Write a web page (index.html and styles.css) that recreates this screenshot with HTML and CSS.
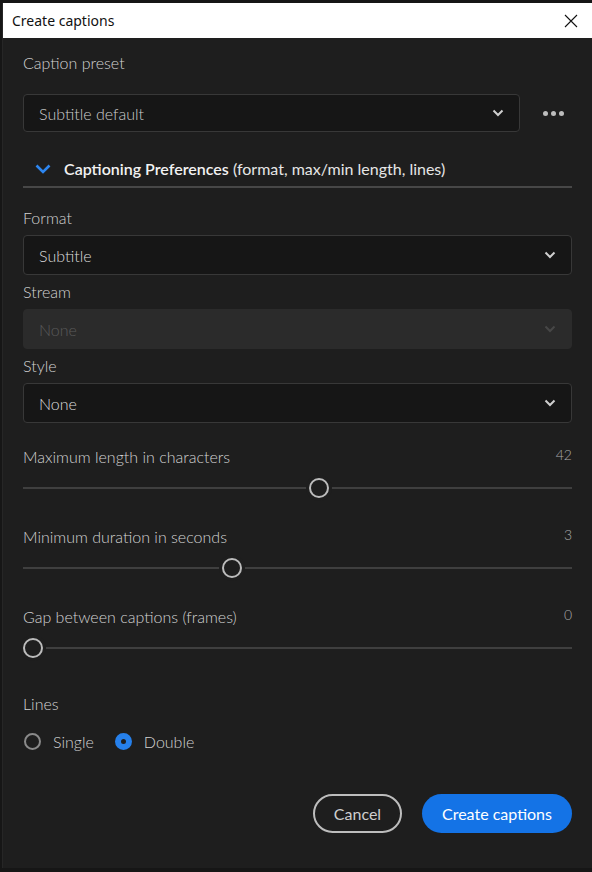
FILE: index.html
```html
<!DOCTYPE html>
<html>
<head>
<meta charset="utf-8">
<link rel="stylesheet" href="styles.css">
</head>
<body>
<div class="dialog">
  <div class="titlebar">
    <span class="title">Create captions</span>
    <svg class="close" width="14" height="14" viewBox="0 0 14 14"><path d="M1 1L13 13M13 1L1 13" stroke="#111" stroke-width="1.1" fill="none"/></svg>
  </div>
  <div class="content">
    <div class="label first">Caption preset</div>
    <div class="preset-row">
      <div class="select preset">
        <span>Subtitle default</span>
        <svg class="chev" width="12" height="8" viewBox="0 0 12 8"><path d="M1.5 1.5L6 6L10.5 1.5" stroke="#cfcfcf" stroke-width="2" fill="none"/></svg>
      </div>
      <div class="more"><i></i><i></i><i></i></div>
    </div>
    <div class="prefs">
      <svg class="bluechev" width="16" height="10" viewBox="0 0 16 10"><path d="M1.5 1.5L8 8L14.5 1.5" stroke="#2d86f0" stroke-width="2.6" fill="none"/></svg>
      <span class="prefs-text"><b>Captioning Preferences</b> (format, max/min length, lines)</span>
    </div>
    <div class="label gap-top">Format</div>
    <div class="select">
      <span>Subtitle</span>
      <svg class="chev" width="12" height="8" viewBox="0 0 12 8"><path d="M1.5 1.5L6 6L10.5 1.5" stroke="#cfcfcf" stroke-width="2" fill="none"/></svg>
    </div>
    <div class="label">Stream</div>
    <div class="select disabled">
      <span>None</span>
      <svg class="chev" width="12" height="8" viewBox="0 0 12 8"><path d="M1.5 1.5L6 6L10.5 1.5" stroke="#474747" stroke-width="2" fill="none"/></svg>
    </div>
    <div class="label">Style</div>
    <div class="select">
      <span>None</span>
      <svg class="chev" width="12" height="8" viewBox="0 0 12 8"><path d="M1.5 1.5L6 6L10.5 1.5" stroke="#cfcfcf" stroke-width="2" fill="none"/></svg>
    </div>

    <div class="slider-block s1">
      <div class="slider-head"><span>Maximum length in characters</span><span class="val">42</span></div>
      <div class="slider"><div class="track"></div><div class="thumb" style="left: 286px"></div></div>
    </div>
    <div class="slider-block">
      <div class="slider-head"><span>Minimum duration in seconds</span><span class="val">3</span></div>
      <div class="slider"><div class="track"></div><div class="thumb" style="left: 199px"></div></div>
    </div>
    <div class="slider-block">
      <div class="slider-head"><span>Gap between captions (frames)</span><span class="val">0</span></div>
      <div class="slider"><div class="track"></div><div class="thumb" style="left: 0px"></div></div>
    </div>

    <div class="label lines">Lines</div>
    <div class="radios">
      <label class="radio"><span class="dot"></span>Single</label>
      <label class="radio on"><span class="dot"></span>Double</label>
    </div>

    <div class="buttons">
      <button class="btn cancel">Cancel</button>
      <button class="btn primary">Create captions</button>
    </div>
  </div>
</div>
</body>
</html>
```
FILE: styles.css
```css
html, body {
  margin: 0;
  padding: 0;
}
body {
  background: #161616;
  width: 592px;
  height: 872px;
  overflow: hidden;
  font-family: "Lato", "Open Sans", sans-serif;
}
.dialog {
  margin: 3px 0 0 3px;
  height: 865px;
  background: #1e1e1e;
  display: flex;
  flex-direction: column;
  box-shadow: -1px 0 0 #262626;
}
.titlebar {
  height: 35px;
  background: #ffffff;
  display: flex;
  align-items: center;
  justify-content: space-between;
  padding: 0 14px 0 9px;
  flex: none;
}
.title {
  font-family: "Noto Sans", "Open Sans", sans-serif;
  font-size: 14px;
  color: #111;
}
.close {
  display: block;
}
.content {
  padding: 0 20px 0 20px;
  display: flex;
  flex-direction: column;
  color: #d2d2d2;
  font-size: 16px;
  font-weight: 300;
}
.label {
  height: 20px;
  line-height: 20px;
  margin-top: 7px;
  margin-bottom: 7px;
  color: #d2d2d2;
}
.label.first {
  margin-top: 15px;
  margin-bottom: 21px;
}
.label.gap-top {
  margin-top: 20px;
}
.preset-row {
  display: flex;
  align-items: center;
  height: 38px;
}
.select {
  box-sizing: border-box;
  height: 40px;
  background: #161616;
  border: 1px solid #383838;
  border-radius: 4px;
  display: flex;
  align-items: center;
  justify-content: space-between;
  padding: 0 15px 0 15px;
  color: #dcdcdc;
}
.select.preset {
  height: 38px;
  width: 497px;
  flex: none;
  color: #cccccc;
}
.select.disabled {
  background: #2b2b2b;
  border-color: #2b2b2b;
  color: #5a5a5a;
}
.chev {
  display: block;
}
.more {
  flex: 1;
  display: flex;
  justify-content: center;
  gap: 3px;
  padding-left: 14px;
}
.more i {
  display: block;
  width: 5px;
  height: 5px;
  border-radius: 50%;
  background: #bdbdbd;
}
.prefs {
  margin-top: 18px;
  height: 36px;
  border-bottom: 2px solid #474747;
  display: flex;
  align-items: center;
  padding-left: 12px;
  gap: 13px;
}
.bluechev {
  display: block;
  margin-top: 2px;
}
.prefs-text {
  color: #e6e6e6;
  font-size: 16px;
  font-weight: 400;
}
.prefs-text b {
  font-weight: 600;
  color: #f2f2f2;
}
.slider-block {
  margin-top: 24px;
}
.slider-block + .slider-block {
  margin-top: 27px;
}
.slider-head {
  height: 20px;
  line-height: 20px;
  display: flex;
  justify-content: space-between;
  color: #d2d2d2;
}
.val {
  font-size: 14px;
  color: #ababab;
  position: relative;
  top: -2px;
}
.slider {
  position: relative;
  height: 24px;
  margin-top: 9px;
}
.track {
  position: absolute;
  left: 0;
  right: 0;
  top: 11px;
  height: 2px;
  background: #3f3f3f;
}
.thumb {
  position: absolute;
  top: 2px;
  width: 16px;
  height: 16px;
  border: 2px solid #bcbcbc;
  border-radius: 50%;
  background: #1e1e1e;
  box-shadow: 0 0 0 3px #1e1e1e;
}
.label.lines {
  margin-top: 34px;
  margin-bottom: 17px;
}
.radios {
  display: flex;
  height: 20px;
  align-items: center;
  gap: 20px;
}
.radio {
  display: flex;
  align-items: center;
  gap: 12px;
  color: #d2d2d2;
}
.radio .dot {
  box-sizing: border-box;
  width: 17px;
  height: 17px;
  border-radius: 50%;
  border: 2px solid #8a8a8a;
  margin-left: 1px;
}
.radio.on .dot {
  border: 6px solid #2680eb;
  background: #1e1e1e;
}
.buttons {
  margin-top: 43px;
  display: flex;
  justify-content: flex-end;
  gap: 20px;
}
.btn {
  box-sizing: border-box;
  height: 39px;
  border-radius: 20px;
  font-family: "Lato", "Open Sans", sans-serif;
  font-size: 16px;
  font-weight: 400;
  padding: 0;
}
.cancel {
  width: 89px;
  background: transparent;
  border: 2px solid #bdbdbd;
  color: #cfcfcf;
}
.primary {
  width: 150px;
  background: #1473e6;
  border: none;
  color: #ffffff;
}
```
